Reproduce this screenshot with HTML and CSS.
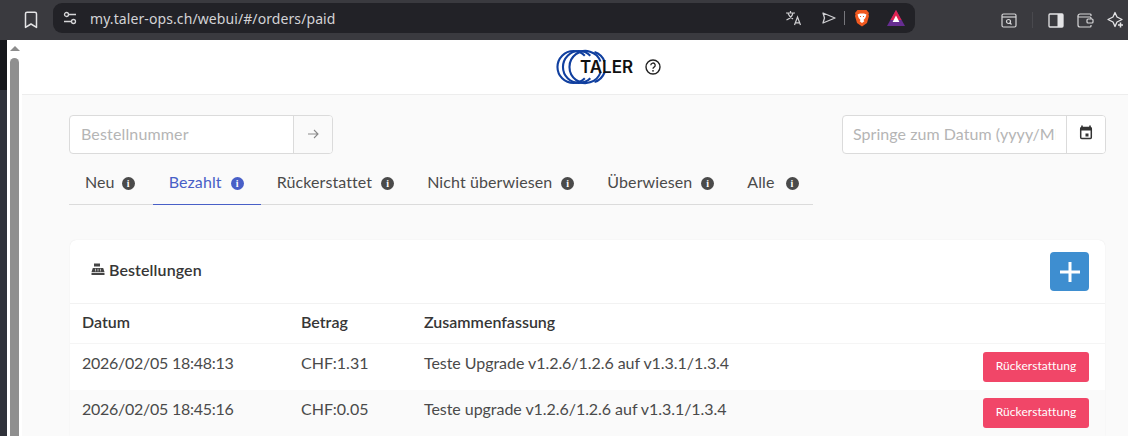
FILE: index.html
```html
<!DOCTYPE html>
<html lang="de">
<head>
<meta charset="utf-8">
<title>Taler Merchant Backoffice</title>
<link rel="stylesheet" href="styles.css">
</head>
<body>
<div class="toolbar">
  <svg class="bookmark" width="16" height="18" viewBox="0 0 16 18"><path d="M2.5 2.8a1.6 1.6 0 0 1 1.6-1.6h7.8a1.6 1.6 0 0 1 1.6 1.6v13.6L8 13 2.5 16.400z" fill="none" stroke="#e4e4e6" stroke-width="1.500" stroke-linejoin="round"/></svg>
  <div class="urlbar">
    <svg class="tune" width="14" height="14" viewBox="0 0 14 14"><g fill="none" stroke="#d6d6d8" stroke-width="1.300"><circle cx="3.500" cy="3.500" r="2"/><path d="M6 3.500h7M1 10.500h7"/><circle cx="10.500" cy="10.500" r="2"/></g></svg>
    <span class="url">my.taler-ops.ch/webui/#/orders/paid</span>
    <div class="url-actions">
      <svg class="translate" width="18" height="16" viewBox="0 0 18 16"><g fill="none" stroke="#cfcfd2" stroke-width="1.200"><path d="M1 3h9M5.500 1v2M8 3c-.8 3-3 5.500-6.500 7M3 3.500c1 2.500 2.500 4 5 5.500"/><path d="M9.500 15l3-8 3 8M10.500 12.800h4"/></g></svg>
      <svg width="16" height="14" viewBox="0 0 16 14"><path d="M2 2l12 5-12 5 1.500-5z" fill="none" stroke="#cfcfd2" stroke-width="1.300" stroke-linejoin="round"/></svg>
      <span class="sep"></span>
      <svg class="brave" width="16" height="18" viewBox="0 0 16 18"><path d="M3.500 1h9L15 4l-.5 1.500.5 1.500-2 7-5 3.500L3 14 1 7l.5-1.500L1 4z" fill="#f1591f"/><path d="M3.500 5.500L6 4.500h4l2.500 1-1.200 3.500L9.500 11l.8 1.300L8 14l-2.300-1.700.8-1.300L4.700 9z" fill="#fff"/><path d="M6 7.500h1M9 7.500h1" stroke="#f1591f" stroke-width="1.200"/></svg>
      <svg width="18" height="16" viewBox="0 0 18 16"><path d="M9 0l9 16H0z" fill="#662d91"/><path d="M9 0l5.500 10H3.500z" fill="#e0234f"/><path d="M9 5.500l3.400 6.500H5.600z" fill="#fff"/></svg>
    </div>
  </div>
  <div class="tools">
    <svg width="16" height="15" viewBox="0 0 16 15"><g fill="none" stroke="#d6d6d8" stroke-width="1.200"><rect x="1" y="1" width="14" height="13" rx="1.500"/><path d="M1 4h14"/><circle cx="7.500" cy="8.500" r="2"/><path d="M9 10l1.500 1.500"/></g></svg>
    <span class="tool-sep"></span>
    <svg width="16" height="15" viewBox="0 0 16 15"><rect x="1" y="1" width="14" height="13" rx="1" fill="none" stroke="#e4e4e6" stroke-width="1.300"/><rect x="9.500" y="1" width="5.500" height="13" fill="#e4e4e6"/></svg>
    <svg width="17" height="15" viewBox="0 0 17 15"><g fill="none" stroke="#d6d6d8" stroke-width="1.200"><path d="M14 3V2a1 1 0 0 0-1-1H3a2 2 0 0 0-2 2v9a2 2 0 0 0 2 2h10a1 1 0 0 0 1-1v-1"/><path d="M1 3.500a1 1 0 0 0 1 .5h11a1 1 0 0 1 1 1v1"/><rect x="10" y="6" width="6" height="4" rx="1"/></g></svg>
    <svg width="17" height="18" viewBox="0 0 17 18"><path d="M8 1.500l2 4.500 5 2.500-5 2.500-2 4.500-2-4.500L1 8.500 6 6z" fill="none" stroke="#e4e4e6" stroke-width="1.300" stroke-linejoin="round"/><path d="M13.500 11.500v5M11 14h5" stroke="#e4e4e6" stroke-width="1.500"/></svg>
  </div>
</div>
<div class="viewport">
  <div class="strip"></div>
  <div class="scrollbar">
    <span class="scroll-arrow"></span>
    <span class="scroll-thumb"></span>
  </div>
  <main class="page">
    <header class="navbar">
      <div class="brand">
        <svg class="logo-rings" width="50" height="36" viewBox="0 0 50 36"><g fill="none" stroke="#103f9f" stroke-width="2.100"><path d="M28.800 6.700A16 16 0 1 0 28.800 29.300"/><path d="M34.300 6.700A16 16 0 1 0 34.300 29.300"/><path d="M44.500 12.500A16 16 0 1 0 44.500 23.500"/><path d="M38.500 3A16 16 0 0 1 48.500 12.500"/><path d="M48.500 23.500A16 16 0 0 1 38.500 33"/></g></svg>
        <span class="logo-text">TALER</span>
      </div>
      <svg class="help" width="16" height="16" viewBox="0 0 16 16"><circle cx="8" cy="8" r="7" fill="none" stroke="#222" stroke-width="1.400"/><path d="M5.800 6.200a2.200 2.200 0 1 1 3.300 1.900c-.8.500-1.100.9-1.100 1.700" fill="none" stroke="#222" stroke-width="1.300"/><circle cx="8" cy="11.800" r=".9" fill="#222"/></svg>
    </header>
    <section class="content">
      <div class="filters">
        <div class="field">
          <input class="input" type="text" placeholder="Bestellnummer">
          <span class="addon">
            <svg width="12" height="12" viewBox="0 0 12 12"><path d="M1 6h10M7 2l4 4-4 4" fill="none" stroke="#8a8a8a" stroke-width="1.100"/></svg>
          </span>
        </div>
        <div class="field">
          <input class="input input-date" type="text" placeholder="Springe zum Datum (yyyy/MM/dd)">
          <span class="addon addon-date">
            <svg width="14" height="15" viewBox="0 0 14 15"><path d="M3 .5v2M11 .5v2" stroke="#333" stroke-width="1.600"/><rect x="1.700" y="2.500" width="10.600" height="11" rx="1" fill="none" stroke="#333" stroke-width="1.500"/><path d="M1.700 3h10.600v2.500H1.700z" fill="#333"/><rect x="6.500" y="8.500" width="3" height="3" fill="#333"/></svg>
          </span>
        </div>
      </div>
      <nav class="tabs">
        <a class="tab tab-first"><span class="tab-label">Neu</span><i class="info">i</i></a>
        <a class="tab tab-active"><span class="tab-label">Bezahlt</span><i class="info">i</i></a>
        <a class="tab"><span class="tab-label">Rückerstattet</span><i class="info">i</i></a>
        <a class="tab"><span class="tab-label">Nicht überwiesen</span><i class="info">i</i></a>
        <a class="tab"><span class="tab-label">Überwiesen</span><i class="info">i</i></a>
        <a class="tab tab-last"><span class="tab-label">Alle</span><i class="info">i</i></a>
      </nav>
      <div class="card">
        <div class="card-head">
          <div class="card-title">
            <svg width="14" height="12" viewBox="0 0 14 12"><path d="M3 .5h6v3H3zM1.800 5h10.400l1.300 4H.5zM.5 9.800h13V12H.5z" fill="#444"/><path d="M4 6.300h1M6.500 6.300h1M9 6.300h1M4 7.800h1M6.500 7.800h1M9 7.800h1" stroke="#fff" stroke-width=".8"/></svg>
            <span class="card-label">Bestellungen</span>
          </div>
          <button class="add-btn" type="button"><svg width="22" height="22" viewBox="0 0 22 22"><path d="M11 1v20M1 11h20" stroke="#fff" stroke-width="3"/></svg></button>
        </div>
        <table class="orders">
          <thead>
            <tr><th class="col-date">Datum</th><th class="col-amount">Betrag</th><th>Zusammenfassung</th><th></th></tr>
          </thead>
          <tbody>
            <tr><td class="cell-date">2026/02/05 18:48:13</td><td>CHF:1.31</td><td class="cell-summary">Teste Upgrade v1.2.6/1.2.6 auf v1.3.1/1.3.4</td><td class="col-action"><button class="refund" type="button">Rückerstattung</button></td></tr>
            <tr class="alt"><td class="cell-date">2026/02/05 18:45:16</td><td>CHF:0.05</td><td class="cell-summary">Teste upgrade v1.2.6/1.2.6 auf v1.3.1/1.3.4</td><td class="col-action"><button class="refund" type="button">Rückerstattung</button></td></tr>
          </tbody>
        </table>
      </div>
    </section>
  </main>
</div>
</body>
</html>
```
FILE: styles.css
```css
* { box-sizing: border-box; }
html, body { margin: 0; height: 100%; overflow: hidden; }
body { width: 1128px; height: 436px; font-family: "Lato", "Open Sans", sans-serif; color: #363636; background: #fff; }

.toolbar { height: 40px; background: #3a3a3f; display: flex; align-items: center; }
.bookmark { margin-left: 23px; flex: none; }
.urlbar { margin-left: 14px; width: 862px; height: 30px; border-radius: 9px; background: #222227; display: flex; align-items: center; flex: none; padding: 0 10px; margin-top: -4px; }
.tune { flex: none; }
.url { margin-left: 13px; font: 14px "Noto Sans", sans-serif; letter-spacing: .09px; color: #d3d3d6; }
.url-actions { margin-left: auto; display: flex; align-items: center; gap: 8px; }
.translate { margin-right: 10px; }
.sep { width: 1px; height: 14px; background: #77777c; margin: 0 1px 0 -1px; }
.brave { margin-right: 9px; }
.tools { margin-left: 86px; display: flex; align-items: center; gap: 13px; flex: none; }
.tool-sep { width: 1px; height: 16px; background: #49494e; margin: 0 2px; }

.viewport { display: flex; height: 396px; }
.strip { width: 7px; flex: none; background: linear-gradient(#15161b 50px, #2f323a 50px); }
.scrollbar { width: 15px; background: #fff; flex: none; display: flex; flex-direction: column; align-items: center; padding-top: 6px; }
.scroll-arrow { width: 0; height: 0; border-left: 5px solid transparent; border-right: 5px solid transparent; border-bottom: 5px solid #8c8c8c; flex: none; }
.scroll-thumb { width: 9px; flex: 1; margin-top: 7px; background: #8f8f8f; border-radius: 5px 5px 0 0; }

.page { flex: 1; background: #fafafa; min-width: 0; }
.navbar { height: 55px; background: #fff; border-bottom: 1px solid #ededed; display: flex; align-items: center; padding-left: 534px; }
.brand { display: flex; align-items: center; width: 89px; flex: none; }
.logo-rings { flex: none; }
.logo-text { font: 600 17px "Inter", sans-serif; color: #111; margin-left: -26px; }
.help { flex: none; }

.content { padding: 20px 22px 0 47px; }
.filters { display: flex; justify-content: space-between; }
.field { display: flex; width: 264px; height: 39px; border: 1px solid #dbdbdb; border-radius: 4px; background: #fff; overflow: hidden; }
.input { flex: 1; min-width: 0; border: 0; outline: 0; background: transparent; font: 16px "Lato", sans-serif; letter-spacing: .15px; padding: 0 10px 2px 11px; margin: 0; }
.input-date { letter-spacing: .05px; padding-left: 10px; }
.input::placeholder { color: #b5b5b5; opacity: 1; }
.addon { width: 39px; flex: none; border-left: 1px solid #dbdbdb; background: #fafafa; display: flex; align-items: center; justify-content: center; padding-bottom: 2px; }
.addon-date { background: #fff; align-items: flex-start; padding: 9px 0 0; }

.tabs { display: flex; width: 744px; height: 43px; margin-top: 8px; border-bottom: 1px solid #dbdbdb; }
.tab { display: flex; flex: none; align-items: center; gap: 9px; height: 43px; padding: 0 17px 0 16px; font-size: 16px; letter-spacing: .1px; color: #4a4a4a; white-space: nowrap; border-bottom: 1px solid transparent; }
.tab-first { gap: 7px; padding-right: 18px; }
.tab-last { gap: 11px; }
.tab-label { padding-bottom: 4px; }
.tab-active { color: #485fc7; border-bottom-color: #485fc7; }
.info { width: 13px; height: 13px; border-radius: 50%; background: #4a4a4a; color: #fff; font: 700 10px/13px "Liberation Serif", serif; text-align: center; margin-top: 1px; }
.tab-active .info { background: #485fc7; }

.card { margin: 35px 1px 0; background: #fff; border-radius: 6px 6px 0 0; box-shadow: 0 0 1px rgba(10,10,10,.12); overflow: hidden; }
.card-head { height: 64px; display: flex; align-items: center; justify-content: space-between; border-bottom: 1px solid #f2f2f2; padding: 0 16px 0 21px; }
.card-title { display: flex; align-items: center; gap: 5px; font-size: 16px; font-weight: 600; color: #363636; }
.card-title svg { margin-bottom: 5px; }
.card-label { padding-bottom: 4px; margin-left: -1px; letter-spacing: .1px; }
.add-btn { width: 39px; height: 39px; border: 0; border-radius: 4px; background: #3e8ed0; padding: 0; display: flex; align-items: center; justify-content: center; }

.orders { width: 100%; border-collapse: separate; border-spacing: 0; font-size: 16px; color: #4a4a4a; }
.orders th { height: 40px; text-align: left; padding: 0 12px 4px; font-weight: 600; color: #363636; border-bottom: 1px solid #f5f5f5; }
.orders td { height: 46px; padding: 0 12px 9px; vertical-align: middle; }
.col-date { width: 219px; }
.col-amount { width: 123px; }
.cell-date { letter-spacing: -.26px; }
.cell-summary { letter-spacing: -.05px; }
.alt { background: #fafafa; }
.orders .col-action { text-align: right; padding: 0 16px 0 0; }
.refund { width: 106px; height: 30px; border: 0; border-radius: 3px; background: #f14668; color: #fff; font: 12px "Lato", sans-serif; letter-spacing: .05px; padding: 0 0 3px; vertical-align: middle; }
```
